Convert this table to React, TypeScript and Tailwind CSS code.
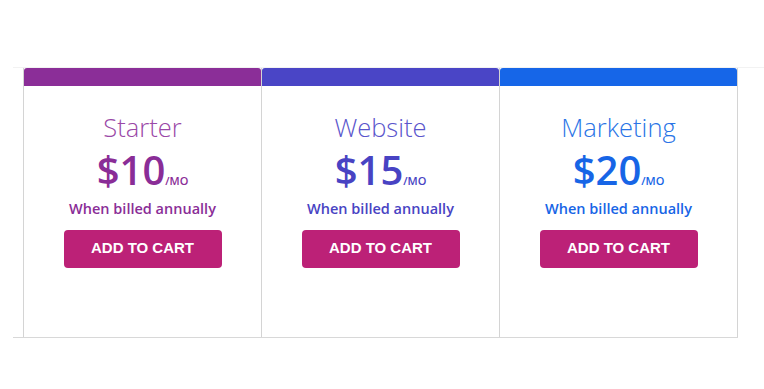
import React from "react";

const plans = [
  { name: "Starter", price: "$10", bar: "bg-[#8b2e98]", title: "text-[#9a48a7]", text: "text-[#8a2d97]" },
  { name: "Website", price: "$15", bar: "bg-[#4a45c6]", title: "text-[#5a55cc]", text: "text-[#4843c3]" },
  { name: "Marketing", price: "$20", bar: "bg-[#1666e8]", title: "text-[#2a74e6]", text: "text-[#1765e6]" },
];

const PlanCard = ({ plan, first }: { plan: (typeof plans)[number]; first?: boolean }) => {
  return (
    <div
      className={`flex h-[269px] flex-col items-center border-r border-[#d4d4d4] ${
        first ? "w-[239px] border-l" : "w-[238px]"
      }`}
    >
      <div className={`h-[18px] w-full rounded-t-[3px] ${plan.bar}`} />
      <div className={`mt-[29px] text-[25.5px] font-light leading-none ${plan.title}`}>{plan.name}</div>
      <div className={`mt-[9px] flex items-baseline leading-none ${plan.text}`}>
        <span className="text-[40px] font-semibold">{plan.price}</span>
        <span className="text-[11px] font-semibold">/MO</span>
      </div>
      <div className={`mt-[10px] text-[14.5px] font-semibold leading-[18px] ${plan.text}`}>
        When billed annually
      </div>
      <button className="mt-[12px] h-[38px] w-[158px] rounded-[4px] bg-[#bc2177] font-['Liberation_Sans',Arial,sans-serif] text-[15px] font-bold text-white">
        ADD TO CART
      </button>
    </div>
  );
};

export default function App() {
  return (
    <div className="h-[389px] w-[764px] bg-white pt-[67px] font-['Open_Sans',sans-serif]">
      <div className="ml-[13px] border-t border-[#f2f2f2]">
        <div className="w-[725px] border-b border-[#d8d8d8] pl-[10px]">
          <div className="flex">
            {plans.map((p, i) => (
              <PlanCard key={p.name} plan={p} first={i === 0} />
            ))}
          </div>
        </div>
      </div>
    </div>
  );
}
